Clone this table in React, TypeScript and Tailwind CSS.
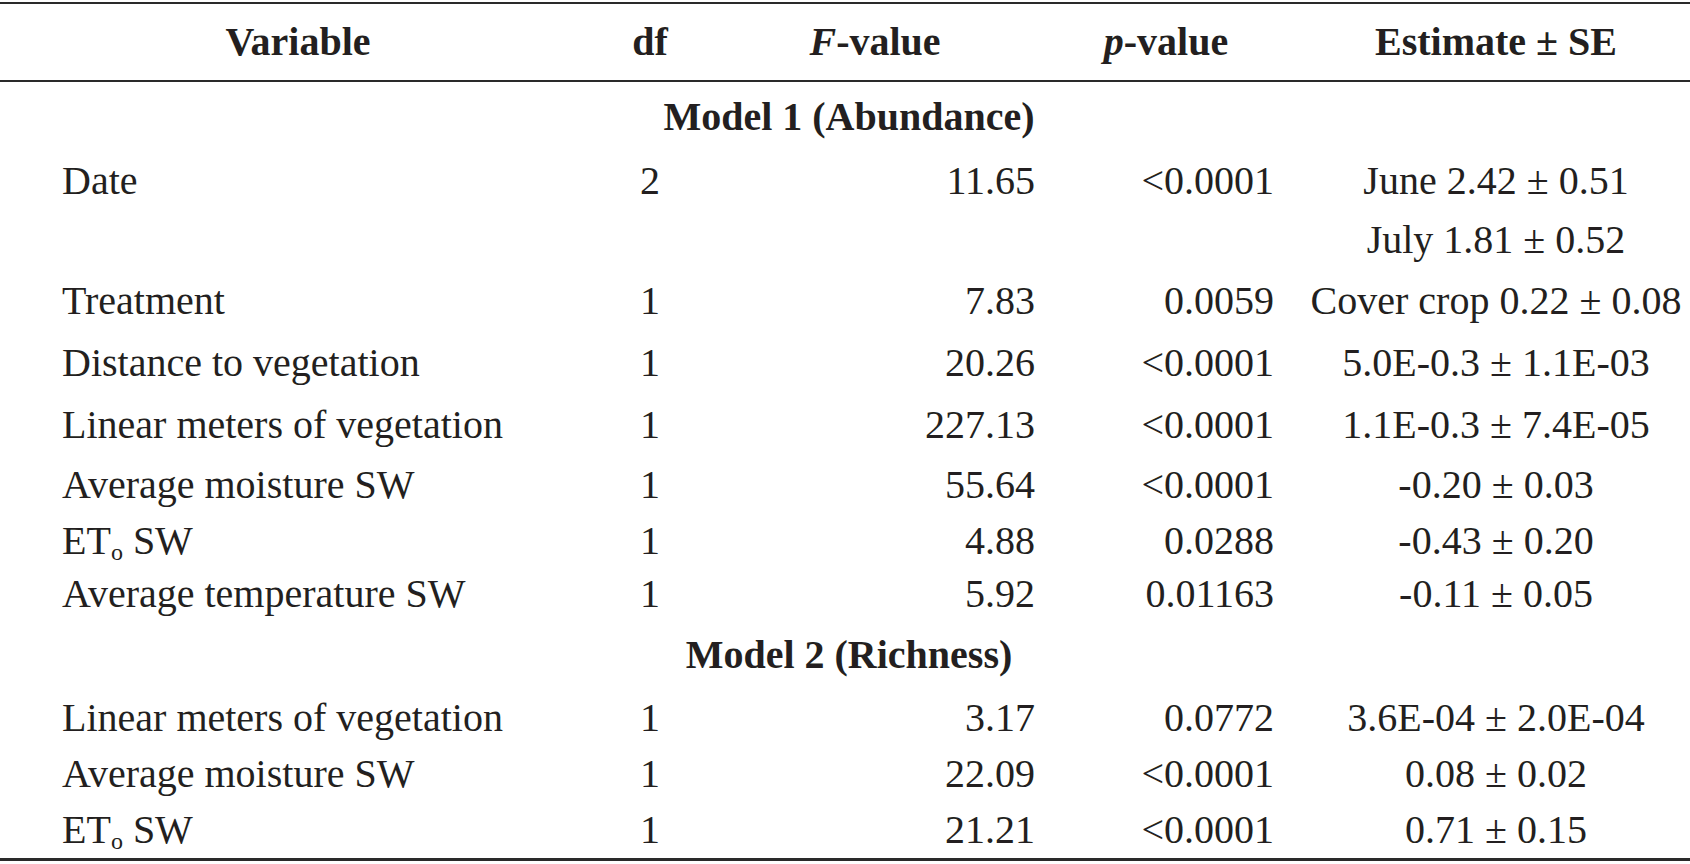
import React from "react";

type Row = {
  variable?: React.ReactNode;
  df?: string;
  f?: string;
  p?: string;
  est?: string;
  h: string;
};

const cols = "grid grid-cols-[596px_108px_342px_254px_390px] items-center";

const ETo = (
  <span>
    ET<span className="relative top-[6px] text-[24px]">o</span> SW
  </span>
);

const model1: Row[] = [
  { variable: "Date", df: "2", f: "11.65", p: "<0.0001", est: "June 2.42 ± 0.51", h: "h-[60px]" },
  { est: "July 1.81 ± 0.52", h: "h-[60px]" },
  { variable: "Treatment", df: "1", f: "7.83", p: "0.0059", est: "Cover crop 0.22 ± 0.08", h: "h-[62px]" },
  { variable: "Distance to vegetation", df: "1", f: "20.26", p: "<0.0001", est: "5.0E-0.3 ± 1.1E-03", h: "h-[62px]" },
  { variable: "Linear meters of vegetation", df: "1", f: "227.13", p: "<0.0001", est: "1.1E-0.3 ± 7.4E-05", h: "h-[62px]" },
  { variable: "Average moisture SW", df: "1", f: "55.64", p: "<0.0001", est: "-0.20 ± 0.03", h: "h-[58px]" },
  { variable: ETo, df: "1", f: "4.88", p: "0.0288", est: "-0.43 ± 0.20", h: "h-[54px]" },
  { variable: "Average temperature SW", df: "1", f: "5.92", p: "0.01163", est: "-0.11 ± 0.05", h: "h-[52px]" },
];

const model2: Row[] = [
  { variable: "Linear meters of vegetation", df: "1", f: "3.17", p: "0.0772", est: "3.6E-04 ± 2.0E-04", h: "h-[56px]" },
  { variable: "Average moisture SW", df: "1", f: "22.09", p: "<0.0001", est: "0.08 ± 0.02", h: "h-[56px]" },
  { variable: ETo, df: "1", f: "21.21", p: "<0.0001", est: "0.71 ± 0.15", h: "h-[56px]" },
];

function DataRow({ row }: { row: Row }) {
  return (
    <div className={`${cols} ${row.h}`}>
      <div className="pl-[62px] whitespace-nowrap">{row.variable}</div>
      <div className="text-center">{row.df}</div>
      <div className="pr-[11px] text-right">{row.f}</div>
      <div className="pr-[26px] text-right">{row.p}</div>
      <div className="pl-[2px] text-center whitespace-nowrap">{row.est}</div>
    </div>
  );
}

function ModelRow({ title, h }: { title: string; h: string }) {
  return (
    <div className={`flex items-center justify-center pl-[8px] font-bold ${h}`}>{title}</div>
  );
}

export default function App() {
  return (
    <div className="min-h-screen w-[1690px] bg-white pt-[2px] font-['Liberation_Serif','Times_New_Roman',serif] text-[40px] leading-none text-[#231f20]">
      {/* header */}
      <div className={`${cols} h-[80px] border-y-2 border-[#2a2a2a] font-bold`}>
        <div className="text-center">Variable</div>
        <div className="text-center">df</div>
        <div className="text-center">
          <i>F</i>-value
        </div>
        <div className="pr-[14px] text-center">
          <i>p</i>-value
        </div>
        <div className="pl-[2px] text-center">Estimate ± SE</div>
      </div>

      <ModelRow title="Model 1 (Abundance)" h="h-[70px]" />
      {model1.map((r, i) => (
        <DataRow key={i} row={i === 0 ? { ...r, h: "h-[58px]" } : r} />
      ))}

      <ModelRow title="Model 2 (Richness)" h="h-[70px]" />
      {model2.map((r, i) => (
        <DataRow key={i} row={r} />
      ))}

      <div className="border-t-[3px] border-[#2a2a2a]" />
    </div>
  );
}
